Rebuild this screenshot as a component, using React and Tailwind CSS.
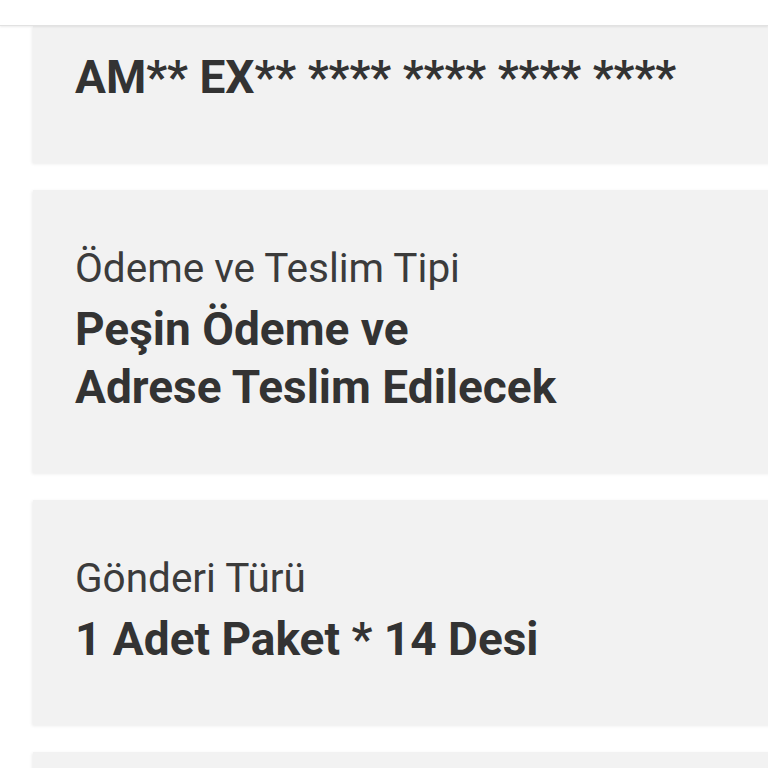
import React from "react";

const cards = [
  { label: "Ödeme ve Teslim Tipi", value: ["Peşin Ödeme ve", "Adrese Teslim Edilecek"] },
  { label: "Gönderi Türü", value: ["1 Adet Paket * 14 Desi"] },
];

const Value = ({ lines, className = "" }) => (
  <div className={"text-[46px] leading-[58px] font-bold text-[#333333] " + className}>
    {lines.map((line) => (
      <div key={line}>{line}</div>
    ))}
  </div>
);

const InfoCard = ({ label, value }) => (
  <div className="bg-[#f2f2f2] pl-[42px] pt-[56px] pb-[57px] shadow-[-1px_1px_3px_rgba(0,0,0,0.08)]">
    <div className="text-[40.5px] leading-[44px] text-[#3b3b3b]">{label}</div>
    <Value lines={value} className="mt-[10px]" />
  </div>
);

const App = () => {
  return (
    <div
      className="h-screen overflow-hidden bg-white"
      style={{ fontFamily: "Roboto, 'Liberation Sans', sans-serif" }}
    >
      <div className="relative z-10 h-[26px] bg-white border-b border-[#e2e2e2] shadow-[0_1px_2px_rgba(0,0,0,0.08)]" />
      <div className="flex flex-col gap-[27px] ml-[33px] -mr-[40px]">
        <div className="bg-[#f2f2f2] pl-[42px] pt-[22px] pb-[57px] shadow-[-1px_1px_3px_rgba(0,0,0,0.08)]">
          <Value lines={["AM** EX** **** **** **** ****"]} />
        </div>
        {cards.map((c) => (
          <InfoCard key={c.label} label={c.label} value={c.value} />
        ))}
        <div className="h-[60px] bg-[#f2f2f2] shadow-[-1px_1px_3px_rgba(0,0,0,0.08)]" />
      </div>
    </div>
  );
};

export default App;
